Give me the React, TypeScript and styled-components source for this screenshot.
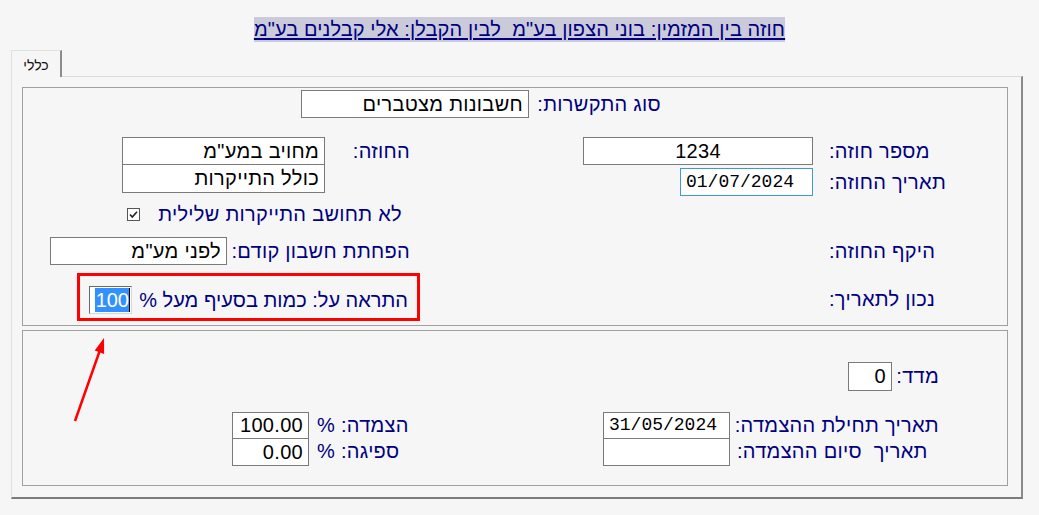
import React from 'react';
import styled, { createGlobalStyle } from 'styled-components';

const GlobalStyle = createGlobalStyle`
  html, body { margin: 0; padding: 0; background: #f6f6f6; }
  body { font-family: "Liberation Sans", Arial, sans-serif; }
`;

const Page = styled.div`
  position: relative;
  width: 1039px;
  height: 515px;
  background: #f6f6f6;
  overflow: hidden;
  font-family: "Liberation Sans", Arial, sans-serif;
`;

const TitleRow = styled.div`
  display: flex;
  justify-content: center;
  padding-top: 17px;
  height: 25px;
`;

const Title = styled.span`
  direction: rtl;
  white-space: pre;
  background: #cacadb;
  color: #000080;
  font-size: 20px;
  letter-spacing: 0.1px;
  line-height: 25px;
  text-decoration: underline;
  text-underline-offset: 2px;
`;

const TabStrip = styled.div`
  display: flex;
  margin-top: 8px;
  padding-left: 11px;
  height: 27px;
  position: relative;
  z-index: 1;
`;

const Tab = styled.div`
  width: 51px;
  height: 27px;
  box-sizing: border-box;
  border-left: 1px solid #e0e0e0;
  border-top: 1px solid #e0e0e0;
  border-right: 2px solid #8c8c8c;
  background: #f6f6f6;
  font-size: 14px;
  color: #111;
  display: flex;
  align-items: center;
  justify-content: center;
  direction: rtl;
  padding-top: 1px;
`;

const Panel = styled.div`
  margin-top: -1px;
  margin-left: 11px;
  width: 1012px;
  height: 423px;
  box-sizing: border-box;
  border-top: 1px solid #dcdcdc;
  border-left: 1px solid #e0e0e0;
  border-right: 2px solid #8a8a8a;
  border-bottom: 2px solid #7c7c7c;
  padding: 10px 13px 0 10px;
`;

const GroupBox = styled.div<{ $h: number; $mt?: number }>`
  box-sizing: border-box;
  height: ${p => p.$h}px;
  margin-top: ${p => p.$mt ?? 0}px;
  border: 1px solid #a0a0a0;
  direction: rtl;
  display: flex;
  flex-direction: column;
`;

const Row = styled.div<{ $mt?: number; $pr?: number; $h: number }>`
  display: flex;
  align-items: center;
  margin-top: ${p => p.$mt ?? 0}px;
  padding-right: ${p => p.$pr ?? 0}px;
  height: ${p => p.$h}px;
  flex: none;
`;

const Block = styled.div<{ $mt?: number; $pr?: number }>`
  display: flex;
  align-items: flex-start;
  margin-top: ${p => p.$mt ?? 0}px;
  padding-right: ${p => p.$pr ?? 0}px;
  flex: none;
`;

const Column = styled.div<{ $w?: number; $mr?: number }>`
  display: flex;
  flex-direction: column;
  width: ${p => (p.$w ? `${p.$w}px` : 'auto')};
  margin-right: ${p => p.$mr ?? 0}px;
  flex: none;
`;

const Label = styled.div<{ $w?: number; $align?: 'left' | 'right'; $pl?: number; $mr?: number; $h?: number; $pt?: number; $ls?: number }>`
  width: ${p => (p.$w ? `${p.$w}px` : 'auto')};
  height: ${p => (p.$h ? `${p.$h}px` : 'auto')};
  line-height: ${p => (p.$h ? `${p.$h}px` : 'normal')};
  flex: none;
  box-sizing: border-box;
  text-align: ${p => p.$align ?? 'right'};
  padding-left: ${p => p.$pl ?? 0}px;
  padding-top: ${p => p.$pt ?? 0}px;
  margin-right: ${p => p.$mr ?? 0}px;
  color: #000080;
  font-size: 20px;
  letter-spacing: ${p => p.$ls ?? 0.3}px;
  white-space: pre;
`;

const Field = styled.div<{ $w: number; $h?: number; $align?: 'left' | 'right' | 'center'; $mono?: boolean; $focus?: boolean; $mr?: number }>`
  box-sizing: border-box;
  width: ${p => p.$w}px;
  height: ${p => p.$h ?? 28}px;
  line-height: ${p => (p.$h ?? 28) - 2}px;
  margin-right: ${p => p.$mr ?? 0}px;
  flex: none;
  background: #fff;
  border: 1px solid ${p => (p.$focus ? '#3c9ad6' : '#7a7a7a')};
  color: #000;
  font-family: ${p => (p.$mono ? '"Liberation Mono", "Courier New", monospace' : '"Liberation Sans", Arial, sans-serif')};
  font-size: ${p => (p.$mono ? 18 : 20)}px;
  letter-spacing: ${p => (p.$mono ? 0 : 0.3)}px;
  text-align: ${p => p.$align ?? 'right'};
  direction: ${p => (p.$mono ? 'ltr' : 'rtl')};
  padding: 0 5px;
  white-space: pre;
  overflow: hidden;
`;

const Stack = styled.div<{ $w: number; $mr?: number }>`
  box-sizing: border-box;
  width: ${p => p.$w}px;
  margin-right: ${p => p.$mr ?? 0}px;
  flex: none;
  border: 1px solid #7a7a7a;
  background: #fff;
  display: flex;
  flex-direction: column;
`;

const StackCell = styled.div<{ $h: number; $mono?: boolean }>`
  height: ${p => p.$h}px;
  line-height: ${p => p.$h}px;
  padding: 0 5px;
  color: #000;
  white-space: pre;
  font-family: ${p => (p.$mono ? '"Liberation Mono", "Courier New", monospace' : '"Liberation Sans", Arial, sans-serif')};
  font-size: ${p => (p.$mono ? 18 : 20)}px;
  letter-spacing: ${p => (p.$mono ? 0 : 0.3)}px;
  direction: ${p => (p.$mono ? 'ltr' : 'rtl')};
  text-align: ${p => (p.$mono ? 'left' : 'right')};
  & + & {
    border-top: 1px solid #7a7a7a;
  }
`;

const CheckBox = styled.span`
  display: inline-flex;
  width: 13px;
  height: 13px;
  margin-right: 18px;
  flex: none;
`;

const RedBox = styled.div<{ $w: number; $mr: number }>`
  box-sizing: border-box;
  width: ${p => p.$w}px;
  height: 48px;
  margin-right: ${p => p.$mr}px;
  flex: none;
  border: 3px solid #f00;
  display: flex;
  align-items: center;
  justify-content: space-between;
  padding: 6px 9px 0 9px;
`;

const SelectedField = styled.div`
  box-sizing: border-box;
  width: 43px;
  height: 28px;
  flex: none;
  background: #fff;
  border-style: solid;
  border-width: 1px;
  border-color: #6a6a6a #d8d8d8 #d8d8d8 #6a6a6a;
  display: flex;
  justify-content: flex-end;
  align-items: stretch;
  padding: 1px 1px 1px 4px;
  direction: ltr;
`;

const Selection = styled.span`
  background: #3390ff;
  color: #fff;
  font-size: 20px;
  line-height: 24px;
  padding: 0 0 0 1px;
  border-right: 1px solid #000;
`;

const ArrowLayer = styled.svg`
  position: absolute;
  left: 60px;
  top: 330px;
  pointer-events: none;
`;

export default function App() {
  return (
    <Page>
      <GlobalStyle />
      <TitleRow>
        <Title>{'חוזה בין המזמין: בוני הצפון בע"מ  לבין הקבלן: אלי קבלנים בע"מ'}</Title>
      </TitleRow>
      <TabStrip>
        <Tab>כללי</Tab>
      </TabStrip>
      <Panel>
        <GroupBox $h={239}>
          <Row $mt={2} $pr={346} $h={28}>
            <Label $w={132}>סוג התקשרות:</Label>
            <Field $w={228}>חשבונות מצטברים</Field>
          </Row>
          <Block $mt={19}>
            <Column>
              <Row $h={28}>
                <Label $w={178} $align="left">מספר חוזה:</Label>
                <Field $w={230} $mr={16} $align="center">1234</Field>
              </Row>
              <Row $h={28} $mt={3}>
                <Label $w={178} $align="left">תאריך החוזה:</Label>
                <Field $w={133} $mr={16} $mono $focus $align="left">01/07/2024</Field>
              </Row>
            </Column>
            <Label $w={85} $h={28} $mr={173}>החוזה:</Label>
            <Stack $w={203}>
              <StackCell $h={26}>{'מחויב במע"מ'}</StackCell>
              <StackCell $h={27}>כולל התייקרות</StackCell>
            </Stack>
          </Block>
          <Row $mt={8} $pr={605} $h={20}>
            <Label>לא תחושב התייקרות שלילית</Label>
            <CheckBox>
              <svg width="13" height="13" viewBox="0 0 13 13">
                <rect x="0.5" y="0.5" width="12" height="12" fill="#fff" stroke="#555" />
                <path d="M3 6.5 L5.3 9 L10 3.8" fill="none" stroke="#222" strokeWidth="1.6" />
              </svg>
            </CheckBox>
          </Row>
          <Row $mt={13} $h={28}>
            <Label $w={178} $align="left">היקף החוזה:</Label>
            <Label $w={183} $mr={419}>הפחתת חשבון קודם:</Label>
            <Field $w={177}>{'לפני מע"מ'}</Field>
          </Row>
          <Row $mt={8} $h={48}>
            <Label $w={178} $align="left" $pt={4}>נכון לתאריך:</Label>
            <RedBox $w={343} $mr={409}>
              <Label $ls={0}>התראה על: כמות בסעיף מעל %</Label>
              <SelectedField>
                <Selection>100</Selection>
              </SelectedField>
            </RedBox>
          </Row>
        </GroupBox>
        <GroupBox $h={156} $mt={4}>
          <Row $mt={31} $pr={68} $h={29}>
            <Label $w={47}>מדד:</Label>
            <Field $w={44} $h={29}>0</Field>
          </Row>
          <Block $mt={21} $pr={68}>
            <Column $w={209}>
              <Label $h={26} $align="left" $pl={7}>תאריך תחילת ההצמדה:</Label>
              <Label $h={26} $align="left" $pl={7}>תאריך  סיום ההצמדה:</Label>
            </Column>
            <Stack $w={127}>
              <StackCell $h={25} $mono>31/05/2024</StackCell>
              <StackCell $h={26} $mono>{''}</StackCell>
            </Stack>
            <Column $w={101} $mr={193}>
              <Label $h={26} $align="left" $pl={8}>הצמדה: %</Label>
              <Label $h={26} $align="left" $pl={8}>ספיגה: %</Label>
            </Column>
            <Stack $w={77}>
              <StackCell $h={25}>100.00</StackCell>
              <StackCell $h={26}>0.00</StackCell>
            </Stack>
          </Block>
        </GroupBox>
      </Panel>
      <ArrowLayer width="60" height="100" viewBox="0 0 60 100">
        <line x1="15" y1="91" x2="40" y2="20" stroke="#f00" strokeWidth="2.5" />
        <polygon points="44,8 34.7,20.6 44.1,23.9" fill="#f00" />
      </ArrowLayer>
    </Page>
  );
}
